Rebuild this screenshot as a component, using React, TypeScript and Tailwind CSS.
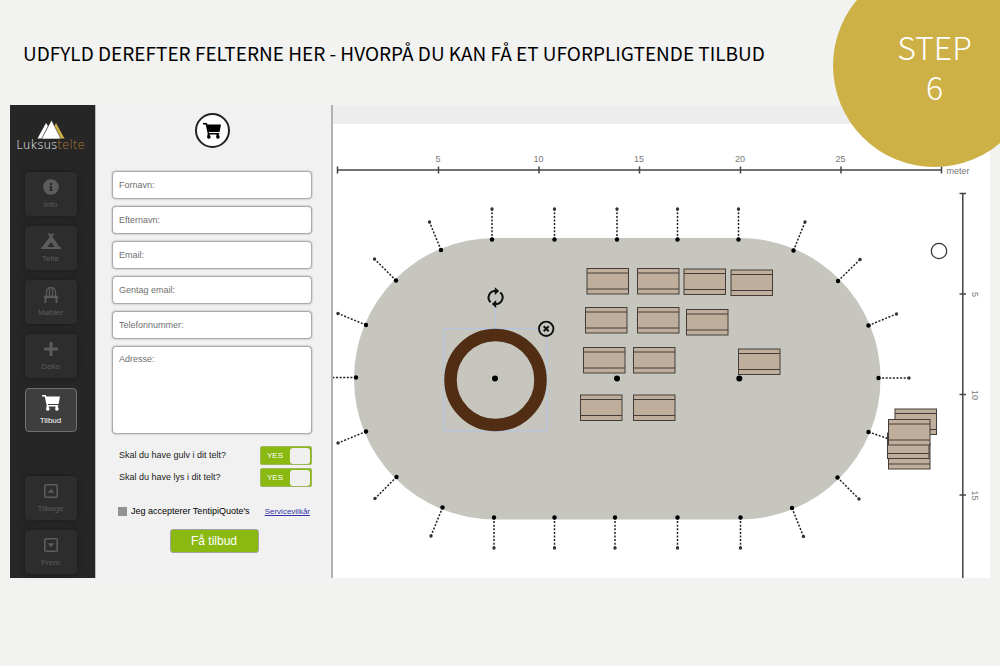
import type { ReactNode } from "react";
import { useState } from "react";
import { FaCampground, FaInfoCircle, FaPlus } from "react-icons/fa";

function CartIcon({ className }: { className?: string }) {
  return (
    <svg viewBox="0 0 18 16" className={className} fill="currentColor" aria-hidden="true">
      <path d="M0 0h3.800l.6 1.500H18L16.600 9H5.800l.2 1.100h10.200v1.300H4.900L2.700 1.500H0z" />
      <path d="M4.600 11h2v2h-2zM13.600 11h2v2h-2z" />
      <circle cx="5.800" cy="13.900" r="1.800" />
      <circle cx="14.900" cy="13.900" r="1.800" />
    </svg>
  );
}

function ChairIcon({ className }: { className?: string }) {
  return (
    <svg viewBox="0 0 14 16" className={className} fill="none" stroke="currentColor" aria-hidden="true">
      <path d="M2.500 9V5a4.500 4.500 0 0 1 9 0v4M5.500 9V1.500M8.500 9V1.500" strokeWidth="1.300" />
      <path d="M0 10h14" strokeWidth="2.400" />
      <path d="M1.500 10v6M12.500 10v6" strokeWidth="1.800" />
    </svg>
  );
}

function BoxArrow({ down = false }: { down?: boolean }) {
  return (
    <svg viewBox="0 0 14 14" className="size-3.5" aria-hidden="true">
      <rect x="0.800" y="0.800" width="12.400" height="12.400" rx="1" fill="none" stroke="currentColor" strokeWidth="1.600" />
      <path d={down ? "M3.500 5.200h7L7 9.200z" : "M3.500 8.800h7L7 4.800z"} fill="currentColor" />
    </svg>
  );
}

function Logo() {
  return (
    <a href="#" className="flex flex-col items-center pt-[15px]">
      <svg viewBox="0 0 28 20" className="h-5 w-7" aria-hidden="true">
        <path d="M19 3l8.500 15.500H22L17 7z" fill="#cdb045" />
        <path d="M9 3L0.500 18.500H5L11 6z" fill="#fff" />
        <path d="M14.500 0L4.500 19h19.500z" fill="#fff" stroke="#262626" strokeWidth="0.600" />
      </svg>
      <span className="font-['DejaVu_Sans'] text-[12px] leading-[10px] font-extralight text-neutral-100">
        Luksus<span className="text-[#b57c33]">telte</span>
      </span>
    </a>
  );
}

function NavButton({ label, icon, active = false }: { label: string; icon: ReactNode; active?: boolean }) {
  return (
    <button
      type="button"
      className={
        active
          ? "flex h-11 w-[52px] flex-col items-center gap-1 rounded border border-[#707070] bg-[#3e3e3e] pt-1.5 text-[8px] leading-3 text-white"
          : "flex h-11 w-[52px] flex-col items-center gap-1 rounded bg-[#2d2d2d] pt-[7px] text-[8px] leading-3 text-[#5c5c5c] shadow-[0_0_5px_#1c1c1c]"
      }
    >
      <span className="flex h-4 items-center">{icon}</span>
      {label}
    </button>
  );
}

const FIELDS = ["Fornavn:", "Efternavn:", "Email:", "Gentag email:", "Telefonnummer:"];

const FIELD_CLASS =
  "block w-full rounded border border-[#aaa] bg-white px-1.5 text-[9px] text-black shadow-[0_0_2px_#999] placeholder:text-[#6f6f6f]";

function Toggle({ label }: { label: string }) {
  const [on, setOn] = useState(true);
  return (
    <label className="flex items-center justify-between pl-[7px]">
      {label}
      <input type="checkbox" className="sr-only" checked={on} onChange={() => setOn(!on)} />
      <span
        className={
          on
            ? "flex h-[19px] w-[52px] items-center justify-between rounded-[2px] border border-[#9cb65c] bg-[#8aba11] pr-px pl-1.5 text-[8px] text-white"
            : "flex h-[19px] w-[52px] flex-row-reverse items-center justify-between rounded-[2px] border border-[#aaa] bg-[#999] pr-1.5 pl-px text-[8px] text-white"
        }
      >
        {on ? "YES" : "NO"}
        <span className="h-4 w-5 rounded-[3px] bg-[#f0f0f0]" />
      </span>
    </label>
  );
}

function QuoteForm() {
  return (
    <form
      className="flex w-[238px] shrink-0 flex-col border-r-2 border-l border-r-[#b1b1b1] border-l-[#bbb] bg-[#f1f1f1] pr-[19px] pl-4 text-[9px] text-[#222]"
      onSubmit={(e) => e.preventDefault()}
    >
      <div className="mt-2 mb-[23px] flex size-[35px] items-center justify-center self-center rounded-full border-2 border-[#222] bg-white text-black">
        <CartIcon className="h-4 w-[18px]" />
      </div>
      <div className="flex flex-col gap-[7px]">
        {FIELDS.map((field) => (
          <input key={field} type="text" aria-label={field} placeholder={field} className={`${FIELD_CLASS} h-7`} />
        ))}
        <textarea aria-label="Adresse:" placeholder="Adresse:" className={`${FIELD_CLASS} h-[88px] resize-none pt-1.5`} />
      </div>
      <div className="mt-3 flex flex-col gap-[3px]">
        <Toggle label="Skal du have gulv i dit telt?" />
        <Toggle label="Skal du have lys i dit telt?" />
      </div>
      <div className="mt-[18px] flex items-center justify-between pr-0.5 pl-1.5">
        <label className="flex items-center gap-1 text-black">
          <input type="checkbox" className="size-[9px] appearance-none bg-[#929494] checked:bg-[#8aba11]" />
          Jeg accepterer TentipiQuote's
        </label>
        <a href="#" className="text-[8px] text-[#3333a5] underline">
          Servicevilkår
        </a>
      </div>
      <button
        type="submit"
        className="mt-2.5 ml-1 h-6 w-[89px] self-center rounded-[3px] border border-[#a3a3a3] bg-[#8aba11] text-[12px] leading-5 text-white"
      >
        Få tilbud
      </button>
    </form>
  );
}

// Tent outline pegs: [peg x, peg y, rope end x, rope end y]
const PEGS = [
  [492, 239.500, 492, 209],
  [554.500, 239.500, 554.500, 209],
  [617, 239.500, 617, 209],
  [677.500, 239.500, 677.500, 209],
  [738.500, 239.500, 738.500, 209],
  [793.500, 250.500, 805, 222],
  [838, 281, 860, 259.500],
  [868.500, 325.500, 896.500, 314],
  [878.500, 378, 909, 378],
  [868.500, 432, 896.500, 441.500],
  [837.500, 477.500, 859, 499],
  [792, 508, 803.500, 536.500],
  [740.500, 517.500, 740.500, 548],
  [677.500, 517.500, 677.500, 548],
  [615, 517.500, 615, 548],
  [554.500, 517.500, 554.500, 548],
  [494, 517.500, 494, 548],
  [442.500, 507.500, 431, 536],
  [396.500, 477, 375, 498.500],
  [366, 431.500, 338, 443],
  [356, 377.500, 326, 377.500],
  [366, 325, 338, 313.500],
  [396, 280.500, 374.500, 259],
  [441, 250, 429.500, 222],
];

const TABLES = [
  [587, 268.500],
  [637.500, 268.500],
  [684, 269],
  [731, 270],
  [585.500, 307.500],
  [637.500, 307.500],
  [686.500, 309.500],
  [583.500, 347.500],
  [633.500, 347.500],
  [738.500, 349],
  [580.500, 395],
  [633.500, 395],
  [895, 409],
  [888.500, 443.500],
  [887.500, 433],
  [888.500, 419.500],
];

const MARKS_X = [
  [438.500, 5],
  [539, 10],
  [639.500, 15],
  [740.500, 20],
  [841, 25],
];

const MARKS_Y = [
  [294, 5],
  [394.500, 10],
  [495, 15],
];

function TentCanvas() {
  return (
    <svg viewBox="333 124 657 454" className="block w-full bg-white" role="img" aria-label="Teltplan">
      <g stroke="#444" strokeWidth="1.500" fill="none">
        <path d="M337.500 170H941.500M337.500 166.500v7M941.500 166.500v7" />
        <path d="M962.800 193.500V578M959.500 193.500h6.500" />
        {MARKS_X.map(([x]) => (
          <path key={x} d={`M${x} 166.500v7`} />
        ))}
        {MARKS_Y.map(([y]) => (
          <path key={y} d={`M959.500 ${y}h6.500`} />
        ))}
      </g>
      <g className="font-['Liberation_Sans'] text-[9px]" fill="#777" textAnchor="middle">
        {MARKS_X.map(([x, n]) => (
          <text key={n} x={x - 0.500} y="161.500">
            {n}
          </text>
        ))}
        {MARKS_Y.map(([y, n]) => (
          <text key={n} transform={`translate(971.500 ${y + 0.500}) rotate(90)`}>
            {n}
          </text>
        ))}
        <text x="958" y="173.500">
          meter
        </text>
      </g>

      <rect x="354" y="238" width="526.500" height="281.500" rx="140.500" fill="#c6c6bf" />

      {PEGS.map(([x, y, ex, ey]) => (
        <g key={`${x}-${y}`}>
          <path d={`M${x} ${y}L${ex} ${ey}`} stroke="#222" strokeWidth="1.500" strokeDasharray="2 1.600" />
          <circle cx={x} cy={y} r="2.200" />
          <circle cx={ex} cy={ey} r="1.700" fill="#333" />
        </g>
      ))}

      {TABLES.map(([x, y]) => (
        <g key={`${x}-${y}`} stroke="#443c38">
          <rect x={x} y={y} width="41.500" height="25.500" fill="#bfae9b" />
          <path d={`M${x} ${y + 4.500}h41.500M${x} ${y + 20.500}h41.500`} />
        </g>
      ))}

      <circle cx="617" cy="378.500" r="3" />
      <circle cx="739.300" cy="378.500" r="3" />
      <circle cx="939" cy="251" r="7.700" fill="#fff" stroke="#333" strokeWidth="1.200" />

      {/* Selected round table with its handles */}
      <g>
        <path d="M444 328.500h103V431H444zM495.500 328.500V306" fill="none" stroke="#b4c3e6" />
        <circle cx="495.500" cy="380" r="45" fill="none" stroke="#502d13" strokeWidth="12.500" />
        <circle cx="495" cy="378.500" r="3" />
        <circle cx="546.200" cy="328.800" r="7.200" fill="#c6c6bf" stroke="#111" strokeWidth="1.900" />
        <path d="M543.700 326.300l5 5M548.700 326.300l-5 5" stroke="#111" strokeWidth="2" />
        <g fill="none" stroke="#111" strokeWidth="2">
          <path d="M490.600 302.300a6.500 6.500 0 0 1 4.900-11.200" />
          <path d="M500.200 292.500a6.500 6.500 0 0 1-4.700 11.500" />
        </g>
        <path d="M494.800 287.200l4.400 3.900-4.400 3.900zM496.200 300.100l-4.400 3.900 4.400 3.900z" fill="#111" />
      </g>
    </svg>
  );
}

export default function App() {
  return (
    <div className="relative min-h-screen overflow-hidden bg-[#f2f2f1] font-['Liberation_Sans',sans-serif]">
      <header className="px-[23px] pt-[35px] pb-[34px]">
        <h1 className="font-['Noto_Sans_CJK_JP',sans-serif] text-[19px] leading-9 text-black">
          UDFYLD DEREFTER FELTERNE HER - HVORPÅ DU KAN FÅ ET UFORPLIGTENDE TILBUD
        </h1>
      </header>

      <main className="mx-2.5 flex">
        <nav className="flex w-[85px] shrink-0 flex-col items-center bg-[#262626] pr-1">
          <Logo />
          <div className="mt-[22px] flex flex-col gap-2.5">
            <NavButton label="Info" icon={<FaInfoCircle className="size-4" />} />
            <NavButton label="Telte" icon={<FaCampground className="h-4 w-5" />} />
            <NavButton label="Møbler" icon={<ChairIcon className="h-4 w-3.5" />} />
            <NavButton label="Deko" icon={<FaPlus className="size-4" />} />
            <NavButton label="Tilbud" icon={<CartIcon className="h-4 w-[18px]" />} active />
          </div>
          <div className="mt-auto flex flex-col gap-2.5 pb-1">
            <NavButton label="Tilbage" icon={<BoxArrow />} />
            <NavButton label="Frem" icon={<BoxArrow down />} />
          </div>
        </nav>
        <QuoteForm />
        <section className="min-w-0 flex-1">
          <div className="h-[19px] bg-[#ededed]" />
          <TentCanvas />
        </section>
      </main>

      <div className="absolute -top-9 -right-9 flex size-[203px] items-center justify-center rounded-full bg-[#cdb147]">
        <p className="text-center font-['Noto_Sans_CJK_JP',sans-serif] text-[32px] leading-10 font-light text-white">
          STEP
          <br />6
        </p>
      </div>
    </div>
  );
}
